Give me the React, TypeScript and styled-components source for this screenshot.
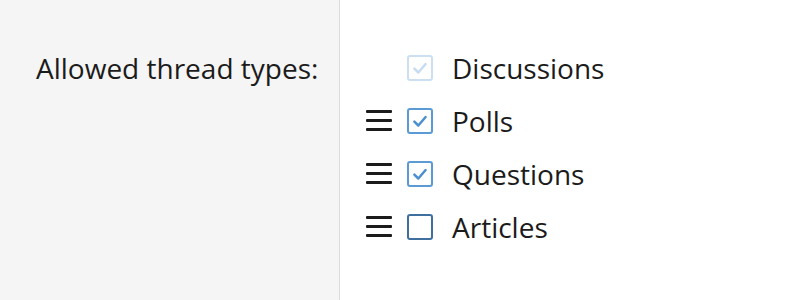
import styled, { createGlobalStyle } from "styled-components"

const GlobalStyle = createGlobalStyle`
	html, body {
		margin: 0;
		padding: 0;
		height: 100%;
		background: #ffffff;
	}
	#root {
		height: 100%;
	}
`

const Page = styled.div`
	display: grid;
	grid-template-columns: 340px 1fr;
	height: 100vh;
	font-family: "Open Sans", "Noto Sans", sans-serif;
	color: #1b1b1b;
`

const LabelColumn = styled.div`
	background: #f5f5f5;
	border-right: 1px solid #dcdcdc;
	padding: 41px 0 0 36px;
`

const Label = styled.div`
	height: 53px;
	display: flex;
	align-items: center;
	font-size: 28px;
`

const OptionList = styled.div`
	display: flex;
	flex-direction: column;
	padding: 41px 0 0 26px;
`

const Row = styled.div`
	height: 53px;
	display: flex;
	align-items: center;
`

const Handle = styled.div<{ $hidden?: boolean }>`
	width: 26px;
	height: 21px;
	margin-right: 15px;
	display: flex;
	flex-direction: column;
	justify-content: space-between;
	visibility: ${(p) => (p.$hidden ? "hidden" : "visible")};

	span {
		display: block;
		height: 3px;
		background: #1b1b1b;
		border-radius: 1px;
	}
`

const Box = styled.div<{ $checked: boolean; $disabled?: boolean }>`
	box-sizing: border-box;
	width: 26px;
	height: 26px;
	border: 2px solid ${(p) => (p.$checked ? "#5b9bd5" : "#3f6f9f")};
	border-radius: 3px;
	background: #fff;
	display: flex;
	align-items: center;
	justify-content: center;
	margin-right: 19px;
	opacity: ${(p) => (p.$disabled ? 0.3 : 1)};
`

const Text = styled.span`
	font-size: 28px;
`

const options = [
	{ name: "Discussions", checked: true, disabled: true, handle: false },
	{ name: "Polls", checked: true, disabled: false, handle: true },
	{ name: "Questions", checked: true, disabled: false, handle: true },
	{ name: "Articles", checked: false, disabled: false, handle: true },
]

const Check = () => (
	<svg width="18" height="18" viewBox="0 0 16 16">
		<path d="M3 8.5 L6.5 12 L13 4.5" fill="none" stroke="#4a8fd0" strokeWidth="2.2" strokeLinecap="round" strokeLinejoin="round" />
	</svg>
)

export default function App() {
	return (
		<>
			<GlobalStyle />
			<Page>
				<LabelColumn>
					<Label>Allowed thread types:</Label>
				</LabelColumn>
				<OptionList>
					{options.map((o) => (
						<Row key={o.name}>
							<Handle $hidden={!o.handle}>
								<span />
								<span />
								<span />
							</Handle>
							<Box $checked={o.checked} $disabled={o.disabled}>
								{o.checked && <Check />}
							</Box>
							<Text>{o.name}</Text>
						</Row>
					))}
				</OptionList>
			</Page>
		</>
	)
}
